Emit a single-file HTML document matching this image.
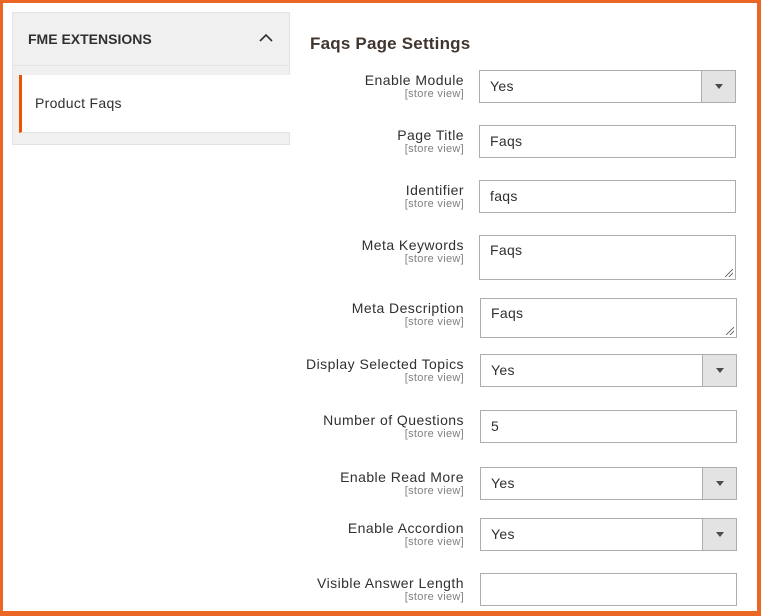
<!DOCTYPE html>
<html><head><meta charset="utf-8"><style>
*{box-sizing:border-box;margin:0;padding:0}
body{width:761px;height:616px;background:#eb6524;position:relative;overflow:hidden;font-family:"Liberation Sans",sans-serif;color:#303030}
#page{position:absolute;left:3px;top:3px;width:754px;height:608px;background:#fff}
.side{position:absolute;left:12px;top:12px;width:278px;height:133px;background:#f0f0f0;border:1px solid #e3e3e3}
.side .hd{height:53px;border-bottom:1px solid #e3e3e3;font-weight:bold;font-size:14px;padding:18px 0 0 15px;position:relative;color:#303030}
.chev{position:absolute;right:16px;top:20px}
.item{position:absolute;left:6px;top:62px;width:271px;height:58px;background:#fff;border-left:3px solid #eb5202;border-bottom:1px solid #e3e3e3;font-size:14px;padding:20px 0 0 13px;color:#303030;letter-spacing:.3px}
h2{position:absolute;left:310px;top:34px;font-size:17px;font-weight:bold;color:#41362f;letter-spacing:.2px}
.lbl{position:absolute;right:297px;text-align:right;font-size:14px;color:#303030;white-space:nowrap;letter-spacing:.45px}
.lbl small{display:block;font-size:11px;color:#808080;margin-top:0;letter-spacing:.3px}
.f{position:absolute;border:1px solid #adadad;background:#fff;font-size:14px;padding:0 10px;color:#303030;letter-spacing:.3px}
.sel .btn{position:absolute;right:0;top:0;bottom:0;width:34px;background:#e3e3e3;border-left:1px solid #adadad}
.sel .btn:after{content:"";position:absolute;left:13px;top:13px;border-left:4px solid transparent;border-right:4px solid transparent;border-top:5px solid #514943}
.ta:after{content:"";position:absolute;right:2px;bottom:2px;width:8px;height:8px;background:linear-gradient(135deg,transparent 45%,#777 45%,#777 55%,transparent 55%,transparent 70%,#777 70%,#777 80%,transparent 80%)}
</style></head><body><div id="page"></div>
<div class="side"><div class="hd">FME EXTENSIONS<svg class="chev" width="14" height="9" viewBox="0 0 14 9"><path d="M1 8 L7 2 L13 8" fill="none" stroke="#303030" stroke-width="1.6"/></svg></div>
<div class="item">Product Faqs</div></div>
<h2>Faqs Page Settings</h2>

<div class="lbl" style="top:72px">Enable Module<small>[store view]</small></div>
<div class="f sel" style="left:479px;top:70px;width:257px;height:33px;line-height:31px">Yes<div class="btn"></div></div>

<div class="lbl" style="top:127px">Page Title<small>[store view]</small></div>
<div class="f" style="left:479px;top:125px;width:257px;height:33px;line-height:31px">Faqs</div>

<div class="lbl" style="top:182px">Identifier<small>[store view]</small></div>
<div class="f" style="left:479px;top:180px;width:257px;height:33px;line-height:31px">faqs</div>

<div class="lbl" style="top:237px">Meta Keywords<small>[store view]</small></div>
<div class="f ta" style="left:479px;top:235px;width:257px;height:45px;padding-top:6px">Faqs</div>

<div class="lbl" style="top:300px">Meta Description<small>[store view]</small></div>
<div class="f ta" style="left:480px;top:298px;width:257px;height:40px;padding-top:6px">Faqs</div>

<div class="lbl" style="top:356px">Display Selected Topics<small>[store view]</small></div>
<div class="f sel" style="left:480px;top:354px;width:257px;height:33px;line-height:31px">Yes<div class="btn"></div></div>

<div class="lbl" style="top:412px">Number of Questions<small>[store view]</small></div>
<div class="f" style="left:480px;top:410px;width:257px;height:33px;line-height:31px">5</div>

<div class="lbl" style="top:469px">Enable Read More<small>[store view]</small></div>
<div class="f sel" style="left:480px;top:467px;width:257px;height:33px;line-height:31px">Yes<div class="btn"></div></div>

<div class="lbl" style="top:520px">Enable Accordion<small>[store view]</small></div>
<div class="f sel" style="left:480px;top:518px;width:257px;height:33px;line-height:31px">Yes<div class="btn"></div></div>

<div class="lbl" style="top:575px">Visible Answer Length<small>[store view]</small></div>
<div class="f" style="left:480px;top:573px;width:257px;height:33px"></div>
</body></html>
